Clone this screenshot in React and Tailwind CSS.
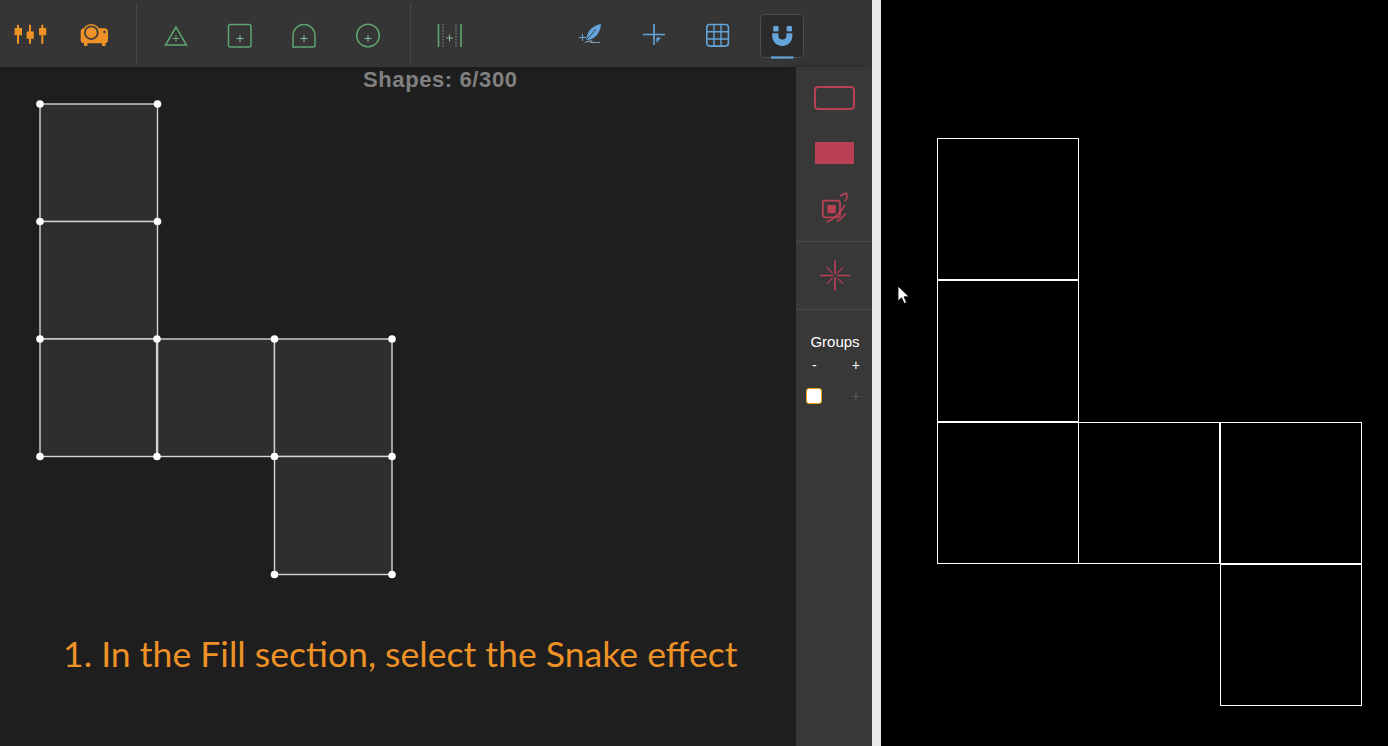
import React from 'react';

const ORANGE = '#ee9126';
const GREEN = '#5fa56f';
const BLUE = '#64a4d8';
const RED = '#b94055';

// every icon is drawn in page coordinates, the viewBox just picks its 48x48 window
const Icon = ({ x0, y0 = 12, children }) => (
  <svg width="48" height="48" viewBox={`${x0} ${y0} 48 48`} className="block" fill="none">
    {children}
  </svg>
);

const Cell = ({ x0, children }) => (
  <div className="w-12 h-12">
    <Icon x0={x0}>{children}</Icon>
  </div>
);

const Plus = ({ x, y, s = 4.5, color = '#8fb89a' }) => (
  <path d={`M${x - s} ${y}H${x + s}M${x} ${y - s}V${y + s}`} stroke={color} strokeWidth="1" />
);

const squares = [
  [40, 104, 157.5, 221.5],
  [40, 221.5, 157.5, 339],
  [40, 339, 156.6, 456.5],
  [157.6, 339, 274.5, 456.5],
  [274.5, 339, 392, 456.5],
  [274.5, 456.5, 392, 574.5],
];

const handles = [
  [40, 104], [157.5, 104], [40, 221.5], [157.5, 221.5], [40, 339], [157, 339], [274.5, 339], [392, 339],
  [40, 456.5], [157, 456.5], [274.5, 456.5], [392, 456.5], [274.5, 574.5], [392, 574.5],
];

const outputSquares = [
  [937.5, 138.5], [937.5, 280.5], [937.5, 422.5], [1078.5, 422.5], [1220.5, 422.5], [1220.5, 564.5],
];

const TopBar = () => (
  <div className="h-[67px] flex items-center bg-[#353535] pt-[5px]">
    <div className="flex items-center gap-4 h-full -mt-[5px] pt-[5px] pl-[6px] pr-[18px] border-r border-[#484848]">
      <Cell x0={6}>
        <path d="M18 24.7V43.7M30 24.7V43.7M42.3 24.7V43.7" stroke={ORANGE} strokeWidth="2" />
        <rect x="14.6" y="28" width="7.4" height="7.2" rx="0.5" fill={ORANGE} />
        <rect x="26.6" y="31.4" width="7.2" height="7.3" rx="0.5" fill={ORANGE} />
        <rect x="39" y="28" width="7.2" height="7.2" rx="0.5" fill={ORANGE} />
      </Cell>
      <Cell x0={70}>
        <rect x="80.7" y="28.3" width="27.3" height="15" rx="3.5" fill={ORANGE} />
        <rect x="84" y="42" width="3.5" height="4" fill={ORANGE} />
        <rect x="102" y="42" width="3.5" height="4" fill={ORANGE} />
        <circle cx="91.3" cy="32.7" r="8.8" fill={ORANGE} />
        <circle cx="91.3" cy="32.7" r="6.4" stroke="#3d3d3d" strokeWidth="1.8" />
        <circle cx="104.5" cy="32" r="1.2" fill="#3d3d3d" />
      </Cell>
    </div>
    <div className="flex items-center gap-4 h-full -mt-[5px] pt-[5px] pl-[15px] pr-[18px] border-r border-[#484848]">
      <Cell x0={152}>
        <path d="M176 27L165.5 45H186.5Z" stroke={GREEN} strokeWidth="1.5" />
        <Plus x={176} y={38.5} s={3.5} color="#6f9f7d" />
      </Cell>
      <Cell x0={216}>
        <rect x="228.5" y="24.5" width="22.5" height="22.5" rx="2" stroke={GREEN} strokeWidth="1.5" />
        <Plus x={240} y={38.5} s={3.5} />
      </Cell>
      <Cell x0={280}>
        <path d="M293 47V35.5A11 11 0 0 1 315 35.5V45A2 2 0 0 1 313 47Z" stroke={GREEN} strokeWidth="1.5" />
        <Plus x={304} y={38.5} s={3.5} />
      </Cell>
      <Cell x0={344}>
        <circle cx="368" cy="35.5" r="11.3" stroke={GREEN} strokeWidth="1.5" />
        <Plus x={368} y={38.5} s={3.5} />
      </Cell>
    </div>
    <div className="flex items-center pl-[14px]">
      <Cell x0={425}>
        <path d="M438.5 24V47M461 24V47" stroke={GREEN} strokeWidth="1.6" />
        <path d="M443 24V47M456 24V47" stroke="#8a9a8e" strokeWidth="1" strokeDasharray="1.5 1.5" />
        <Plus x={449.5} y={38} s={3.5} />
      </Cell>
    </div>
    <div className="flex items-center gap-4 ml-[93px]">
      <Cell x0={566}>
        <path d="M601 24C595 25 590 28.5 587.8 33.5L585.8 40C593 40.5 600 35 601 24Z" fill={BLUE} />
        <path d="M583.5 43L596 29" stroke="#353535" strokeWidth="0.9" />
        <path d="M579 37.5H586M582.5 34V41" stroke={BLUE} strokeWidth="1" />
        <path d="M585 42.5C590 40 594 40.5 591 42.5H600" stroke="#7d97ab" strokeWidth="1.2" />
      </Cell>
      <Cell x0={630}>
        <path d="M643 34.5H665M654 24V45" stroke={BLUE} strokeWidth="1.6" />
        <path d="M656.5 37.5H661L656.5 43Z" fill={BLUE} />
      </Cell>
      <Cell x0={694}>
        <rect x="706.8" y="24.5" width="21.6" height="21.6" rx="3" stroke={BLUE} strokeWidth="1.6" />
        <path d="M714 24.5V46M721 24.5V46M707 31.7H728M707 39H728" stroke={BLUE} strokeWidth="1.4" />
      </Cell>
      <div className="relative w-[44px] h-[44px] mx-[2px] rounded-[5px] border border-[#4a4d4d] bg-[#2b2b2b]">
        <svg width="44" height="44" viewBox="760 13 44 44" className="block -m-px overflow-visible" fill="none">
          <rect x="773.2" y="25" width="5.4" height="5.6" rx="1" fill={BLUE} />
          <rect x="786.6" y="25" width="5.4" height="5.6" rx="1" fill={BLUE} />
          <path d="M772.2 32.3H778.4V34.5A4 4 0 0 0 786.4 34.5V32.3H792.4V35.2A10.1 10.1 0 0 1 772.2 35.2Z" fill={BLUE} />
          <rect x="771" y="55.4" width="22.4" height="2.2" fill={BLUE} />
        </svg>
      </div>
    </div>
  </div>
);

const SideBar = () => (
  <div className="w-[76px] shrink-0 flex flex-col bg-[#383838] shadow-[-4px_0_6px_rgba(0,0,0,0.25)]">
    <div className="h-[175px] flex flex-col items-center border-b border-[#494949] pt-[19px]">
      <div className="w-[41px] h-[24px] rounded-[4px] border-2 border-[#b94055]" />
      <div className="w-[39px] h-[22px] mt-[32px] bg-[#b94055]" />
      <svg width="32" height="34" viewBox="818 191 32 34" className="mt-[27px]" fill="none">
        <rect x="822.8" y="200.7" width="17.2" height="16.6" rx="2.5" stroke={RED} strokeWidth="1.8" />
        <rect x="827.4" y="205" width="8.3" height="8.3" fill={RED} />
        <path d="M840 196C842 194.8 844.5 193.6 846.6 193.4C847.6 196 846.6 199 845 201.7" stroke={RED} strokeWidth="1.6" />
        <path d="M826.7 222.3C834 219 840.5 212.5 845 205M836.7 221.7C840.5 219.5 843.8 216.5 846 213.3" stroke={RED} strokeWidth="1.6" />
      </svg>
    </div>
    <div className="h-[68px] flex items-center justify-center border-b border-[#494949]">
      <svg width="32" height="32" viewBox="818 259.5 32 32" fill="none">
        <path d="M820 275H833.5M836.5 275H850M835 260V273.5M835 276.5V290" stroke={RED} strokeWidth="1.7" />
        <path d="M826.7 266.7L832.4 272.4M843.3 266.7L837.6 272.4M826.7 283.3L832.4 277.6M843.3 283.3L837.6 277.6" stroke={RED} strokeWidth="1.2" />
      </svg>
    </div>
    <div className="flex flex-col font-['Liberation_Sans',sans-serif] text-white">
      <div className="text-[15px] leading-[16px] text-center pl-[2px] mt-[24px]">Groups</div>
      <div className="flex justify-between text-[14px] leading-[16px] pl-[16px] pr-[12px] mt-[7px]">
        <span>-</span>
        <span>+</span>
      </div>
      <div className="flex items-center justify-between pl-[10px] pr-[12px] mt-[14px]">
        <div className="w-[16px] h-[16px] rounded-[3px] bg-white border border-[#f2a01e]" />
        <span className="text-[14px] leading-[16px] pt-px text-[#5b5b5b]">+</span>
      </div>
    </div>
  </div>
);

const App = () => (
  <div className="w-[1388px] h-[746px] flex overflow-hidden bg-black">
    <div className="w-[872px] shrink-0 flex flex-col">
      <TopBar />
      <div className="flex-1 flex min-h-0">
        <div className="relative flex-1 flex flex-col bg-[#1e1e1e]">
          <svg width="796" height="679" viewBox="0 67 796 679" className="absolute inset-0" fill="none">
            {squares.map(([x1, y1, x2, y2], i) => (
              <rect key={i} x={x1} y={y1} width={x2 - x1} height={y2 - y1} fill="#2e2e2e" stroke="#d4d4d4" strokeWidth="1.4" />
            ))}
            {handles.map(([x, y], i) => (
              <circle key={i} cx={x} cy={y} r="3.8" fill="#fff" />
            ))}
          </svg>
          <div className="relative ml-[363px] text-[22px] leading-[26px] font-bold tracking-[0.6px] text-[#808080] font-['Liberation_Sans',sans-serif]">
            Shapes: 6/300
          </div>
          <div className="relative ml-[63px] mt-[539px] text-[35.6px] leading-[44px] text-[#ee9126] whitespace-nowrap font-['Lato',sans-serif]">
            1. In the Fill section, select the Snake effect
          </div>
        </div>
        <SideBar />
      </div>
    </div>
    <div className="w-[9px] shrink-0 bg-[#e9e9e9]" />
    <div className="relative flex-1">
      <svg width="507" height="746" viewBox="881 0 507 746" className="block" fill="none">
        {outputSquares.map(([x, y], i) => (
          <rect key={i} x={x} y={y} width="141" height="141" stroke="#fff" strokeWidth="1" />
        ))}
      </svg>
      <svg width="14" height="20" viewBox="0 0 14 20" className="absolute left-[16px] top-[285px]">
        <path d="M1 1V16L4.6 12.8L7.2 18.5L9.6 17.4L7 11.8H12Z" fill="#fff" stroke="#000" strokeWidth="0.8" />
      </svg>
    </div>
  </div>
);

export default App;
